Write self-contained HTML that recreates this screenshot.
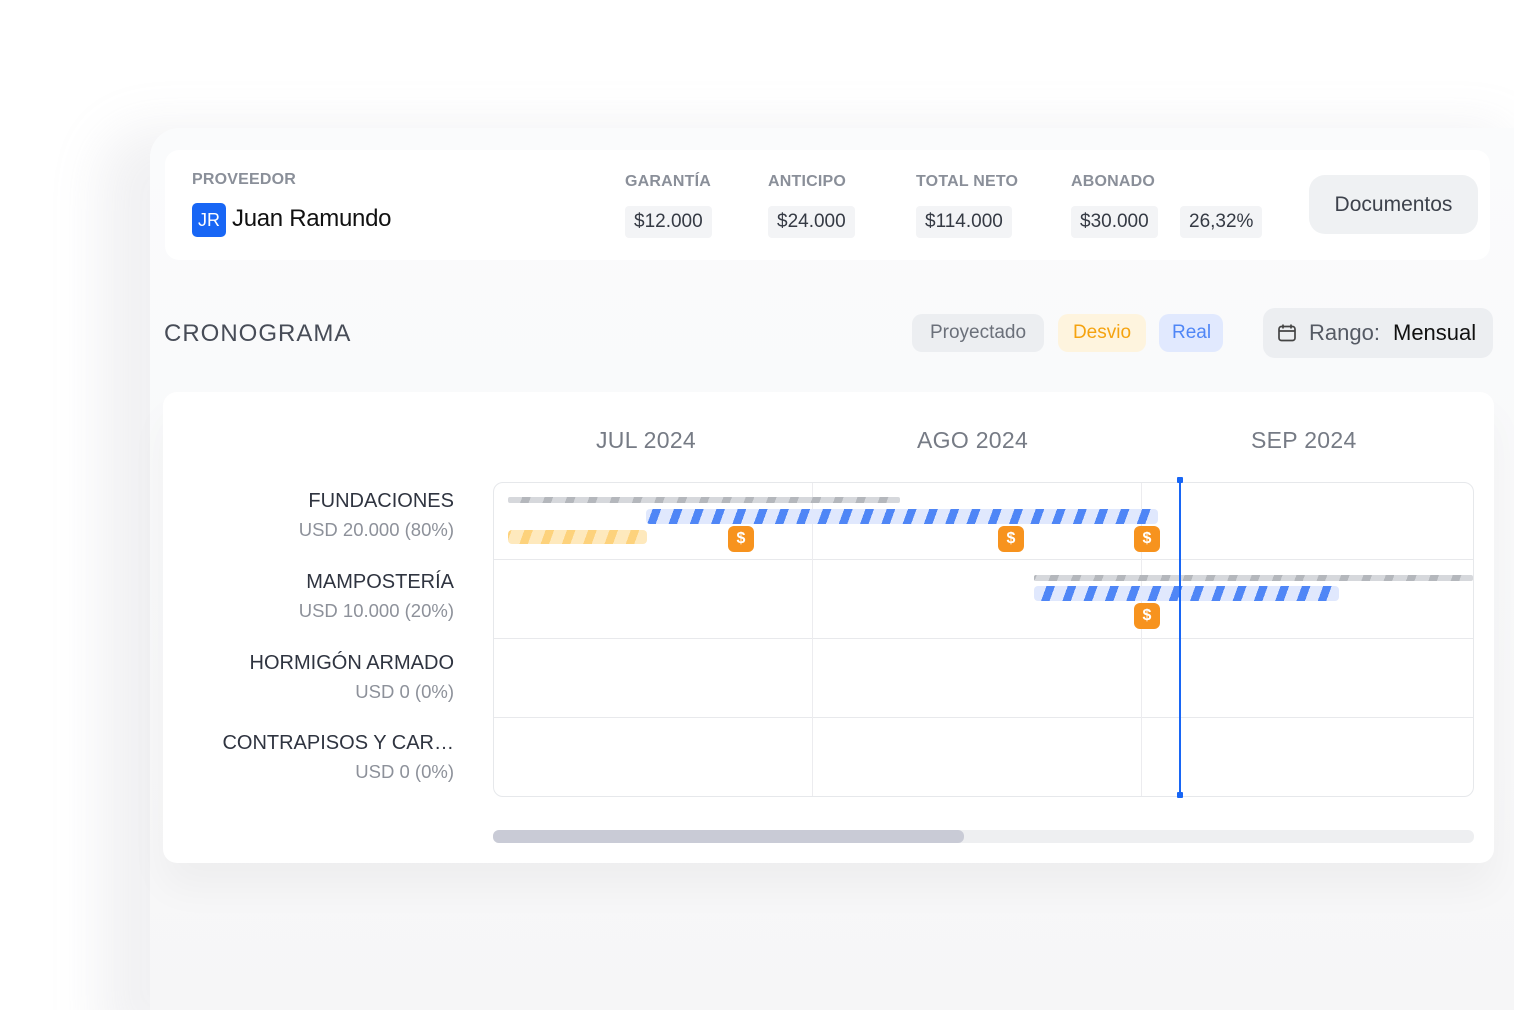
<!DOCTYPE html>
<html style="width:1514px;height:1010px;overflow:hidden"><head><meta charset="utf-8"><style>
*{margin:0;padding:0;box-sizing:border-box}
body{width:1514px;height:1010px;background:#fff;position:relative;overflow:hidden;font-family:"Liberation Sans",sans-serif;color:#3a3f4a}
.a{position:absolute}
.panel{left:150px;top:128px;width:1364px;height:882px;background:linear-gradient(#fafbfc,#f8f8f9 70%,#f6f6f7);border-radius:30px 0 0 0;box-shadow:-30px 20px 50px 20px rgba(240,240,242,0.9)}
.hcard{left:165px;top:150px;width:1325px;height:110px;background:#fff;border-radius:14px}
.lbl{font-size:16px;color:#8a8f99;letter-spacing:.2px;font-weight:600}
.val{height:32px;line-height:32px;background:#f3f4f6;border-radius:4px;font-size:19px;color:#353a44;padding:0 9px}
.pill{height:38px;line-height:38px;border-radius:10px;font-size:19px;padding:0 13px}
.ccard{left:163px;top:392px;width:1331px;height:471px;background:#fff;border-radius:14px;box-shadow:0 25px 40px rgba(0,0,0,0.04)}
.mon{font-size:23px;color:#767b85;top:427px;letter-spacing:.3px}
.rn{font-size:20px;color:#2f3440;text-align:right;width:320px;left:134px}
.rs{font-size:18.5px;color:#8d919a;text-align:right;width:320px;left:134px}
.grid{left:493px;top:482px;width:981px;height:315px;border:1px solid #e6e8eb;border-radius:10px}
.hl{left:494px;width:979px;height:1px;background:#e8e9ec}
.vl{top:483px;width:1px;height:313px;background:#ececef}
.gray{height:6px;background:repeating-linear-gradient(-70deg,#d6d8dc 0 13px,#b4b7bc 13px 21px);border-radius:2px}
.blue{height:15px;background:repeating-linear-gradient(-70deg,#e0e8fd 0 12px,#4f86f6 12px 20px);border-radius:4px}
.yel{height:14px;background:repeating-linear-gradient(-70deg,#fee9bd 0 12px,#fdd27c 12px 20px);border-radius:4px}
.usd{width:26px;height:26px;background:#f7931e;border-radius:6px;color:#fff;font-weight:bold;font-size:16px;text-align:center;line-height:26px}
</style></head><body>
<div class="a panel"></div>
<div class="a hcard"></div>
<div class="a lbl" style="left:192px;top:171px">PROVEEDOR</div>
<div class="a" style="left:192px;top:203px;width:34px;height:34px;background:#1866f5;border-radius:5px;color:#fff;font-size:18px;line-height:34px;text-align:center">JR</div>
<div class="a" style="left:232px;top:205px;font-size:24px;color:#111;letter-spacing:-.3px">Juan Ramundo</div>
<div class="a lbl" style="left:625px;top:173px">GARANTÍA</div>
<div class="a val" style="left:625px;top:206px">$12.000</div>
<div class="a lbl" style="left:768px;top:173px">ANTICIPO</div>
<div class="a val" style="left:768px;top:206px">$24.000</div>
<div class="a lbl" style="left:916px;top:173px">TOTAL NETO</div>
<div class="a val" style="left:916px;top:206px">$114.000</div>
<div class="a lbl" style="left:1071px;top:173px">ABONADO</div>
<div class="a val" style="left:1071px;top:206px">$30.000</div>
<div class="a val" style="left:1180px;top:206px">26,32%</div>
<div class="a" style="left:1309px;top:175px;width:169px;height:59px;background:#eff1f3;border-radius:16px;font-size:21px;line-height:59px;text-align:center;color:#3d424c">Documentos</div>

<div class="a" style="left:164px;top:320px;font-size:24px;color:#474c57;letter-spacing:1px">CRONOGRAMA</div>
<div class="a pill" style="left:912px;top:314px;width:132px;text-align:center;background:#eceef1;color:#6b707a">Proyectado</div>
<div class="a pill" style="left:1058px;top:314px;width:88px;text-align:center;background:#fef4de;color:#f5a30f">Desvio</div>
<div class="a pill" style="left:1159px;top:314px;width:64px;text-align:center;background:#e1e9fe;color:#4f86f6">Real</div>
<div class="a" style="left:1263px;top:308px;width:230px;height:50px;background:#eceef1;border-radius:12px"></div>
<svg class="a" style="left:1277px;top:323px" width="20" height="20" viewBox="0 0 20 20" fill="none" stroke="#444" stroke-width="1.7"><rect x="2" y="3.5" width="16" height="14" rx="2.5"/><path d="M2 8h16M6 1.5v4M14 1.5v4"/></svg>
<div class="a" style="left:1309px;top:320px;font-size:22px;color:#555a64">Rango:</div>
<div class="a" style="left:1393px;top:320px;font-size:22px;color:#111">Mensual</div>

<div class="a ccard"></div>
<div class="a mon" style="left:596px">JUL 2024</div>
<div class="a mon" style="left:917px">AGO 2024</div>
<div class="a mon" style="left:1251px">SEP 2024</div>

<div class="a rn" style="top:490px">FUNDACIONES</div>
<div class="a rs" style="top:519px">USD 20.000 (80%)</div>
<div class="a rn" style="top:571px">MAMPOSTERÍA</div>
<div class="a rs" style="top:600px">USD 10.000 (20%)</div>
<div class="a rn" style="top:652px">HORMIGÓN ARMADO</div>
<div class="a rs" style="top:681px">USD 0 (0%)</div>
<div class="a rn" style="top:732px">CONTRAPISOS Y CAR…</div>
<div class="a rs" style="top:761px">USD 0 (0%)</div>

<div class="a grid"></div>
<div class="a hl" style="top:559px"></div>
<div class="a hl" style="top:638px"></div>
<div class="a hl" style="top:717px"></div>
<div class="a vl" style="left:812px"></div>
<div class="a vl" style="left:1141px"></div>

<div class="a gray" style="left:508px;top:497px;width:392px"></div>
<div class="a blue" style="left:646px;top:509px;width:512px"></div>
<div class="a yel" style="left:508px;top:530px;width:139px"></div>
<div class="a usd" style="left:728px;top:526px">$</div>
<div class="a usd" style="left:998px;top:526px">$</div>
<div class="a usd" style="left:1134px;top:526px">$</div>
<div class="a gray" style="left:1034px;top:575px;width:439px"></div>
<div class="a blue" style="left:1034px;top:586px;width:305px"></div>
<div class="a usd" style="left:1134px;top:603px">$</div>

<div class="a" style="left:1179px;top:480px;width:2px;height:316px;background:#1866f5"></div>
<div class="a" style="left:1177px;top:477px;width:6px;height:6px;background:#1866f5;border-radius:1px"></div>
<div class="a" style="left:1177px;top:792px;width:6px;height:6px;background:#1866f5;border-radius:1px"></div>

<div class="a" style="left:493px;top:830px;width:981px;height:13px;background:#eeeff1;border-radius:6px"></div>
<div class="a" style="left:493px;top:830px;width:471px;height:13px;background:#c9cbd6;border-radius:6px"></div>
</body></html>
